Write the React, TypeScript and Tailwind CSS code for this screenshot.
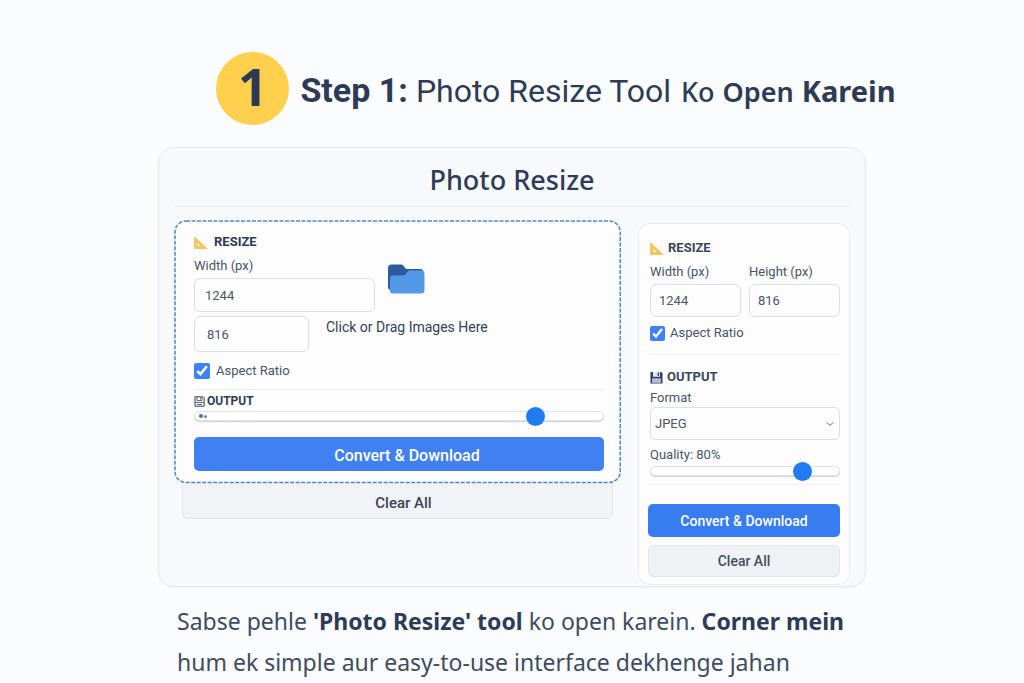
import { useState } from "react";
import { ChevronDown } from "lucide-react";

const inputClass =
  "w-full rounded-md border border-[#dcdfe5] bg-[#fdfdfe] text-[13px] text-[#4a5568] outline-none";

const rangeClass =
  "block h-[10px] w-full appearance-none rounded-full border border-[#dfe1e5] bg-white shadow-[0_1px_1px_#cfd1d6] [&::-webkit-slider-thumb]:size-[19px] [&::-webkit-slider-thumb]:appearance-none [&::-webkit-slider-thumb]:rounded-full [&::-webkit-slider-thumb]:bg-[#1f7cf2]";

function TriangleRuler() {
  return (
    <svg viewBox="0 0 14 13" className="h-[13px] w-[14px]" aria-hidden="true">
      <path
        d="M.5.6v11.9h13zM3.4 7l3 3h-3z"
        fill="#f2c75c"
        fillRule="evenodd"
      />
      <path d="M.5.6v11.9h13" fill="none" stroke="#e9b350" strokeWidth=".6" />
      <path
        d="M3 3.2l-.7.6M5.5 5.4l-.7.6M8 7.7l-.7.6M10.4 9.9l-.6.6"
        stroke="#d89c3c"
        strokeWidth=".5"
      />
    </svg>
  );
}

function Floppy() {
  return (
    <svg viewBox="0 0 13 13" className="size-[13px]" aria-hidden="true">
      <path d="M.5 1h10.8l1.2 1.2v10.3H.5z" fill="#34415c" />
      <path d="M3 1h7v4.8H3z" fill="#dce8f3" />
      <path d="M7.6 1.6h1.5v3.2H7.6z" fill="#34415c" />
      <path d="M2.2 7.4h8.6v4.4H2.2z" fill="#c7d4e2" />
      <path d="M3.2 9h6.6M3.2 10.5h6.6" stroke="#8b9bb3" strokeWidth=".6" />
    </svg>
  );
}

function FloppyOutline() {
  return (
    <svg
      viewBox="0 0 11 11"
      className="size-[11px]"
      fill="none"
      stroke="#3b4454"
      aria-hidden="true"
    >
      <path d="M1 .8h8.2l1 1v8.4H1z" />
      <path d="M3 1v3.5h5V1M6.5 1.5v2M1 6.5h9M3 8.5h5" strokeWidth=".8" />
    </svg>
  );
}

function Folder() {
  return (
    <svg viewBox="0 0 38 30" className="h-[30px] w-[38px]" aria-hidden="true">
      <path
        d="M1 4A3.5 3.5 0 0 1 4.5.5h9.2c1.200 0 2 .3 2.800 1.200L19 5h14a3.500 3.500 0 0 1 3.500 3.500V26H4a3 3 0 0 1-3-3z"
        fill="#2c5c9c"
      />
      <path
        d="M3 14.500a3 3 0 0 1 3-3h9.500c1.300 0 2.100-.4 3-1.300l2.200-2.400c.8-.9 1.600-1.300 2.800-1.300H34a3.500 3.500 0 0 1 3.500 3.500V26a3.500 3.500 0 0 1-3.500 3.500H5.500A2.500 2.500 0 0 1 3 27z"
        fill="#5399e8"
      />
    </svg>
  );
}

function DropZone() {
  const [quality, setQuality] = useState(85);

  return (
    <section className="min-w-0 flex-1">
      <div className="relative rounded-xl bg-[#fdfdfe] pt-3 pr-[17px] pb-3 pl-5">
        {/* dashed outline, finer than a CSS dashed border */}
        <svg className="pointer-events-none absolute inset-0 size-full overflow-visible" aria-hidden="true">
          <rect
            x="1"
            y="1"
            width="99.6%"
            height="99.4%"
            rx="11"
            fill="none"
            stroke="#4a86cf"
            strokeWidth="1.5"
            strokeDasharray="4 1.5"
          />
        </svg>

        <h3 className="flex items-center gap-[6px] text-[13px] leading-5 font-bold text-[#2d3a55]">
          <TriangleRuler />
          RESIZE
        </h3>

        <div className="mt-1 flex items-start gap-3">
          <div className="w-[181px]">
            <label htmlFor="drop-width" className="block text-[13px] leading-5 text-[#4a5568]">
              Width (px)
            </label>
            <input id="drop-width" type="text" defaultValue="1244" className={`${inputClass} mt-[2px] h-[34px] px-[10px]`} />
          </div>
          <div className="pt-2">
            <Folder />
          </div>
        </div>

        <div className="mt-1 flex items-start gap-[17px]">
          <div className="w-[115px]">
            <input type="text" aria-label="Height (px)" defaultValue="816" className={`${inputClass} h-[36px] px-3`} />
          </div>
          <p className="text-sm leading-[22px] text-[#34405a]">Click or Drag Images Here</p>
        </div>

        <label className="mt-[9px] flex items-center gap-[6px] text-[13px] leading-5 text-[#4a5568]">
          <input type="checkbox" defaultChecked className="size-4 accent-[#3b82f6]" />
          Aspect Ratio
        </label>

        <h3 className="mt-2 flex items-center gap-[2px] border-t border-[#ededf0] pt-[2px] text-[12px] leading-[18px] font-bold text-[#343d4f]">
          <FloppyOutline />
          OUTPUT
        </h3>

        <div className="relative mt-px">
          <input
            type="range"
            aria-label="Output quality"
            value={quality}
            onChange={(e) => setQuality(Number(e.target.value))}
            className={rangeClass}
          />
          <span className="pointer-events-none absolute top-[3px] left-[5px] flex items-center gap-px">
            <span className="size-1 rounded-full bg-[#4472b8]" />
            <span className="size-[3px] rounded-full bg-[#5c8ed6]" />
          </span>
        </div>

        <button className="mt-4 block h-[34px] w-full rounded-[5px] bg-[#4080f0] pt-[3px] pl-4 text-base font-medium text-white">
          Convert &amp; Download
        </button>
      </div>

      <div className="px-2">
        <button className="block h-[36px] w-full rounded-b-md border border-t-0 border-[#e3e5ea] bg-[#f2f3f6] pt-[6px] pl-3 text-[15px] font-medium text-[#3a4459]">
          Clear All
        </button>
      </div>
    </section>
  );
}

function Sidebar() {
  const [quality, setQuality] = useState(84);

  return (
    <aside className="mt-[3px] w-[212px] shrink-0 rounded-xl border border-[#e8eaf0] bg-[#fdfdfe] px-[9px] pt-[14px] pb-[7px]">
      <div className="pl-[2px]">
        <h3 className="flex items-center gap-1 text-[13px] leading-5 font-bold text-[#3a4560]">
          <TriangleRuler />
          RESIZE
        </h3>

        <div className="mt-1 grid grid-cols-2 gap-2">
          <div>
            <label htmlFor="side-width" className="block text-[13px] leading-5 text-[#4a5568]">
              Width (px)
            </label>
            <input id="side-width" type="text" defaultValue="1244" className={`${inputClass} mt-[2px] h-[33px] px-2`} />
          </div>
          <div>
            <label htmlFor="side-height" className="block text-[13px] leading-5 text-[#4a5568]">
              Height (px)
            </label>
            <input id="side-height" type="text" defaultValue="816" className={`${inputClass} mt-[2px] h-[33px] px-2`} />
          </div>
        </div>

        <label className="mt-[6px] flex items-center gap-[5px] text-[13px] leading-5 text-[#4a5568]">
          <input type="checkbox" defaultChecked className="size-[15px] accent-[#3b82f6]" />
          Aspect Ratio
        </label>

        <h3 className="mt-[11px] flex items-center gap-1 border-t border-[#f0f1f4] pt-[12px] text-[13px] leading-5 font-bold text-[#3a4560]">
          <Floppy />
          OUTPUT
        </h3>

        <label htmlFor="format" className="mt-[2px] block text-[13px] leading-[18px] text-[#4a5568]">
          Format
        </label>
        <div className="relative">
          <select
            id="format"
            className="h-[33px] w-full appearance-none rounded-md border border-[#dcdfe5] bg-[#fdfdfe] px-1 text-[13px] text-[#4a5568]"
          >
            <option>JPEG</option>
            <option>PNG</option>
            <option>WEBP</option>
          </select>
          <ChevronDown className="pointer-events-none absolute top-[11px] right-1 size-3 text-[#5f6b80]" />
        </div>

        <label htmlFor="quality" className="mt-1 block text-[13px] leading-[22px] text-[#4a5568]">
          Quality: 80%
        </label>
        <input
          id="quality"
          type="range"
          value={quality}
          onChange={(e) => setQuality(Number(e.target.value))}
          className={rangeClass}
        />
      </div>

      <div className="mt-2 flex flex-col gap-2 border-t border-[#f3f4f6] pt-[19px]">
        <button className="h-[33px] rounded-[5px] bg-[#377cf0] text-sm font-medium text-white">
          Convert &amp; Download
        </button>
        <button className="h-[32px] rounded-[5px] border border-[#e3e5ea] bg-[#f0f1f4] text-sm font-medium text-[#434d60]">
          Clear All
        </button>
      </div>
    </aside>
  );
}

export default function App() {
  return (
    <main className="min-h-screen overflow-x-hidden bg-[#fbfcfe] pt-[52px] font-['Noto_Sans',sans-serif] text-[#2d3b57]">
      <header className="flex items-center justify-center gap-[11px] pl-[88px] whitespace-nowrap">
        <span className="flex size-[73px] shrink-0 items-center justify-center rounded-full bg-[#fed04e] pb-[5px] text-[52px] leading-none font-bold">
          1
        </span>
        <h1 className="flex items-baseline gap-2 pt-1 text-[29px]">
          <span className="font-[Roboto,sans-serif] text-[34px] font-bold">Step 1:</span>
          <span className="font-[Roboto,sans-serif] text-[32px]">Photo Resize Tool</span>
          <span className="ml-[2px] text-[27px] font-medium">Ko</span>
          <span className="text-[27px] font-semibold">Open</span>
          <span className="font-bold">Karein</span>
        </h1>
      </header>

      <div className="mx-auto mt-[22px] w-full max-w-[708px] rounded-2xl border border-[#e6e8ef] bg-[#f8f9fd] px-[15px] pb-px shadow-[0_1px_3px_#0000000a]">
        <h2 className="border-b border-[#e6e8ee] pt-[14px] pb-2 text-center text-[27px] leading-[36px] font-medium">
          Photo Resize
        </h2>

        <div className="mt-[13px] flex items-start gap-[17px] font-[Roboto,sans-serif]">
          <DropZone />
          <Sidebar />
        </div>
      </div>

      <p className="mx-auto mt-[14px] w-full max-w-[708px] pl-[19px] text-[23px] leading-[41px] text-[#3f4b62]">
        Sabse pehle <strong className="text-[#2d3b57]">'Photo Resize' tool</strong> ko open karein.{" "}
        <strong className="text-[#2d3b57]">Corner mein</strong>
        <br />
        hum ek simple aur easy-to-use interface dekhenge jahan
      </p>
    </main>
  );
}
